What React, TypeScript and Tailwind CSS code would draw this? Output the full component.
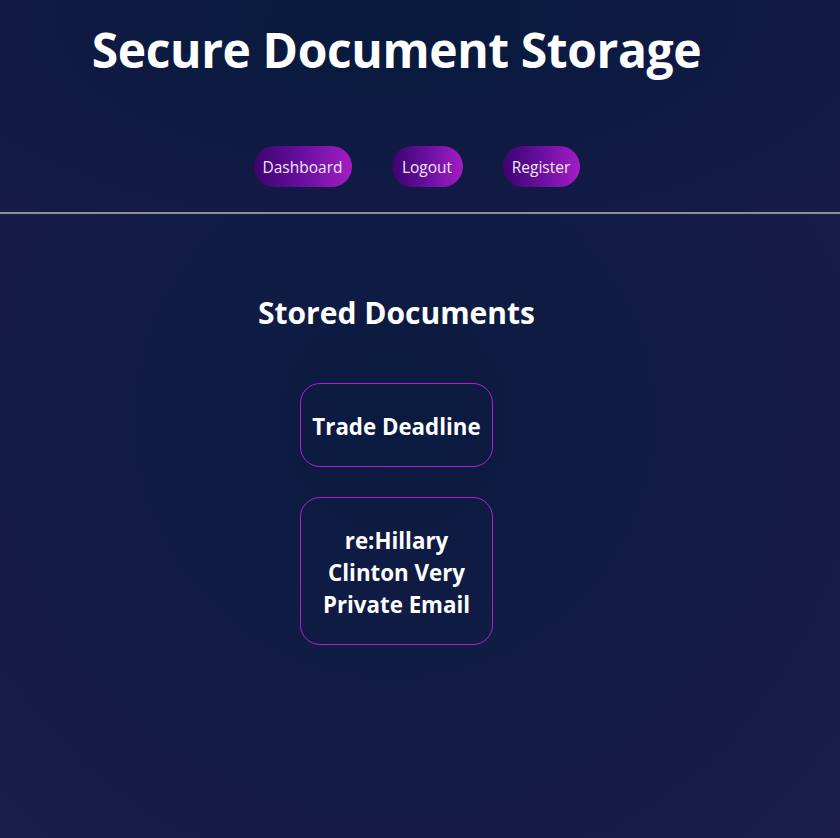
export default function App() {
  const links = [
    { label: "Dashboard", w: "w-[98px]" },
    { label: "Logout", w: "w-[71px]" },
    { label: "Register", w: "w-[77px]" },
  ];
  const docs = ["Trade Deadline", "re:Hillary Clinton Very Private Email"];

  return (
    <div
      className="min-h-[838px] w-full bg-[radial-gradient(circle_at_47%_50%,#0a1a3f_0%,#121c45_45%,#1c1d4a_100%)] text-white"
      style={{ fontFamily: '"Open Sans", "Noto Sans", sans-serif' }}
    >
      <header className="h-[212px] bg-[radial-gradient(ellipse_at_47%_10%,#071a3c_0%,#0d1a42_40%,#171b48_100%)]">
        <div className="w-[793px]">
          <h1 className="pt-[18px] text-center text-[48px] font-bold leading-[64px] tracking-[-0.4px]">
            Secure Document Storage
          </h1>
          <nav className="mt-[64px] flex justify-center gap-[40px] pl-[40px]">
            {links.map((l) => (
              <a
                key={l.label}
                href="#"
                className={`${l.w} flex h-[41px] items-center justify-center rounded-full bg-gradient-to-r from-[#3d0470] via-[#6a0fa0] to-[#a41cc4] pt-[3px] text-[15.5px] text-[#f3e6f7]`}
              >
                {l.label}
              </a>
            ))}
          </nav>
        </div>
      </header>
      <div className="h-[2px] w-full bg-[#8e8e9a]" />
      <main className="w-[793px] pb-10">
        <h2 className="mt-[79px] text-center text-[30px] font-bold leading-[40px]">
          Stored Documents
        </h2>
        <div className="mt-[50px] flex flex-col items-center gap-[30px]">
          {docs.map((d) => (
            <div
              key={d}
              className="flex w-[193px] items-center justify-center rounded-[20px] border border-[#b020d0] px-[8px] pt-[27px] pb-[23px] text-center"
            >
              <span className="text-[22.3px] font-bold leading-[32px]">{d}</span>
            </div>
          ))}
        </div>
      </main>
    </div>
  );
}
